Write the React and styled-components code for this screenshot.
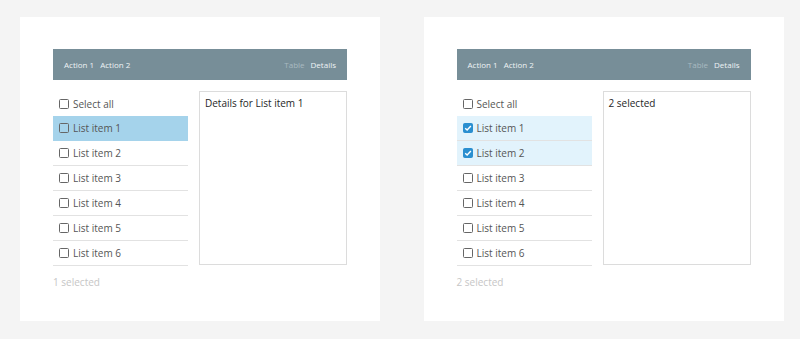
import React from "react";
import styled, { createGlobalStyle } from "styled-components";

const GlobalStyle = createGlobalStyle`
  html, body {
    margin: 0;
    padding: 0;
    background: #f4f4f4;
    font-family: "Open Sans", "Liberation Sans", sans-serif;
  }
`;

const Page = styled.div`
  display: flex;
  gap: 43.5px;
  padding: 17px 0 0 20px;
`;

const Card = styled.div`
  width: 360px;
  height: 304px;
  box-sizing: border-box;
  background: #fff;
  padding: 32px 33px;
`;

const Toolbar = styled.div`
  height: 31px;
  background: #778e98;
  display: flex;
  align-items: center;
  justify-content: space-between;
  padding: 0 11px;
  font-size: 8px;
`;

const ToolGroup = styled.div`
  display: flex;
  gap: 6px;
`;

const ToolItem = styled.span`
  color: ${(p) => (p.$dim ? "#a9bac1" : "#eef3f5")};
`;

const Content = styled.div`
  display: flex;
  gap: 11px;
  margin-top: 11px;
`;

const List = styled.div`
  width: 135px;
  display: flex;
  flex-direction: column;
`;

const Row = styled.div`
  height: 25px;
  box-sizing: border-box;
  display: flex;
  align-items: center;
  gap: 4px;
  padding-left: 6px;
  font-size: 10px;
  color: #555;
  background: ${(p) =>
    p.$active ? "#a5d3eb" : p.$checked ? "#e2f3fc" : "transparent"};
  border-bottom: ${(p) =>
    p.$header ? "none" : `1px solid ${p.$active ? "#a5d3eb" : "#e2e2e2"}`};
`;

const Box = styled.span`
  width: 10px;
  height: 10px;
  box-sizing: border-box;
  border: 1.5px solid #666;
  border-radius: 1.5px;
  display: flex;
  align-items: center;
  justify-content: center;
  flex-shrink: 0;
  ${(p) => p.$on && `background: #2a8fd0; border-color: #2a8fd0;`}
`;

const Details = styled.div`
  flex: 1;
  height: 174px;
  box-sizing: border-box;
  border: 1px solid #dcdcdc;
  padding: 4px 5px;
  font-size: 10px;
  color: #262626;
`;

const Footer = styled.div`
  margin-top: 9px;
  font-size: 10px;
  color: #c6c6c6;
`;

const Checkbox = ({ on }) => (
  <Box $on={on}>
    {on && (
      <svg width="8" height="8" viewBox="0 0 8 8">
        <path d="M1.2 4.2 L3.1 6 L6.9 1.9" stroke="#fff" strokeWidth="1.4" fill="none" />
      </svg>
    )}
  </Box>
);

const items = [1, 2, 3, 4, 5, 6];

const Panel = ({ mode }) => {
  const checked = mode === "multi" ? [1, 2] : [];
  return (
    <Card>
      <Toolbar>
        <ToolGroup>
          <ToolItem>Action 1</ToolItem>
          <ToolItem>Action 2</ToolItem>
        </ToolGroup>
        <ToolGroup>
          <ToolItem $dim>Table</ToolItem>
          <ToolItem>Details</ToolItem>
        </ToolGroup>
      </Toolbar>
      <Content>
        <List>
          <Row $header>
            <Checkbox />
            Select all
          </Row>
          {items.map((n) => (
            <Row
              key={n}
              $active={mode === "single" && n === 1}
              $checked={checked.includes(n)}
            >
              <Checkbox on={checked.includes(n)} />
              List item {n}
            </Row>
          ))}
        </List>
        <Details>
          {mode === "single" ? "Details for List item 1" : "2 selected"}
        </Details>
      </Content>
      <Footer>{mode === "single" ? "1 selected" : "2 selected"}</Footer>
    </Card>
  );
};

export default function App() {
  return (
    <>
      <GlobalStyle />
      <Page>
        <Panel mode="single" />
        <Panel mode="multi" />
      </Page>
    </>
  );
}
